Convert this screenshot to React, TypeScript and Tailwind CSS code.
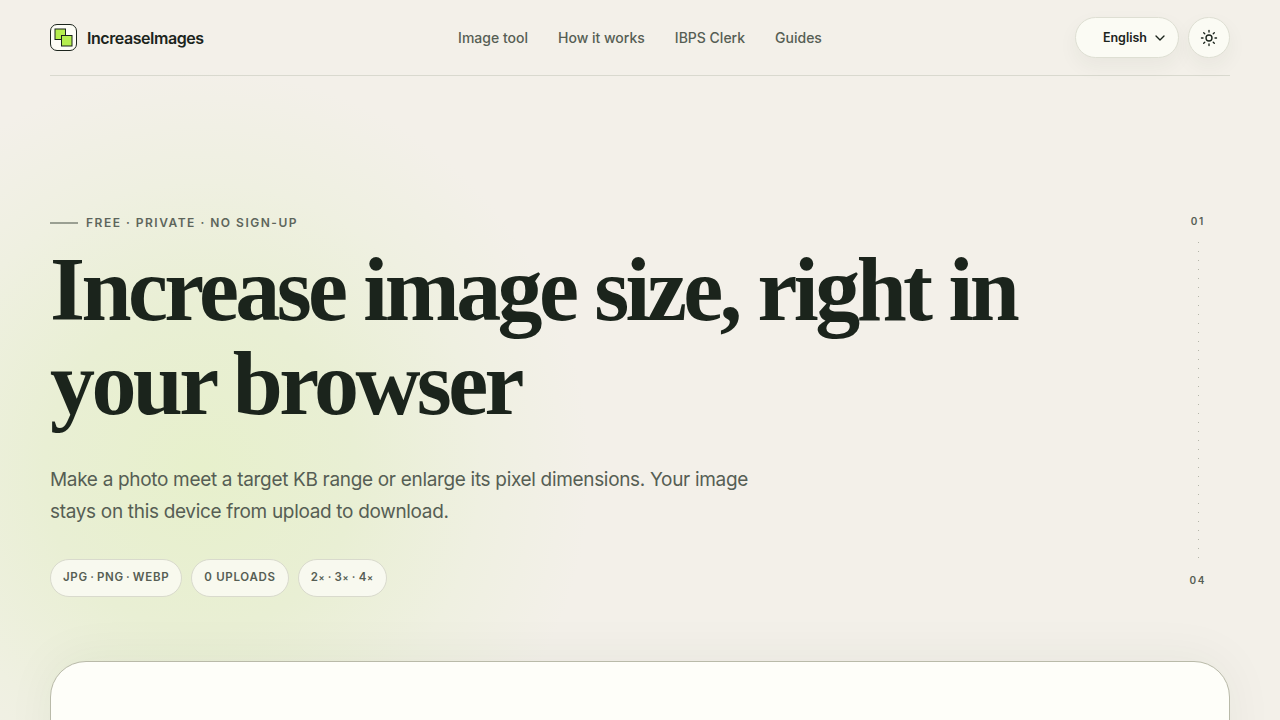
import { ChevronDown, Sun } from 'lucide-react';

const serif = { fontFamily: '"Liberation Serif", serif' };

function Chip({ children, tight }: { children: React.ReactNode; tight?: boolean }) {
  return (
    <span className={`flex h-[38px] items-center rounded-full border border-[#d9dacd] bg-[#fafaf3]/85 px-3 text-[11.5px] font-semibold tracking-[0.06em] text-[#565e54] ${tight ? '[word-spacing:-1.2px]' : ''}`}>
      {children}
    </span>
  );
}

export default function App() {
  return (
    <div className="relative h-[720px] overflow-hidden bg-[#f3f0e9] font-['Inter',sans-serif] text-[#1b241c]">
      {/* green glow behind the hero */}
      <div className="pointer-events-none absolute left-[-190px] top-[70px] h-[800px] w-[780px] rounded-full bg-[radial-gradient(closest-side,#e7f0cc_0%,#e9efd4_40%,#eff0e1_72%,#f3f0e9_100%)]" />

      <div className="relative px-[50px]">
        <header className="flex h-[76px] items-center justify-between border-b border-[#d9d9cf]">
          <div className="flex w-[300px] items-center gap-[10px]">
            <div className="flex h-[27px] w-[27px] items-center justify-center rounded-[7px] border border-[#1b241c] bg-[#fdfdf6]">
              <svg width="19" height="19" viewBox="0 0 19 19">
                <rect x="1" y="1" width="10.5" height="10.5" fill="#b5ee4e" stroke="#1b241c" strokeWidth="1" />
                <rect x="7.5" y="7.5" width="10.5" height="10.5" fill="#b5ee4e" stroke="#1b241c" strokeWidth="1" />
              </svg>
            </div>
            <span className="text-[16px] font-semibold tracking-[-0.028em]">IncreaseImages</span>
          </div>
          <nav className="flex items-center gap-[30px] text-[14px] font-medium text-[#565e54]">
            <span>Image tool</span>
            <span>How it works</span>
            <span>IBPS Clerk</span>
            <span>Guides</span>
          </nav>
          <div className="flex w-[300px] items-center justify-end gap-[9px]">
            <div className="flex h-[41px] w-[104px] items-center justify-end gap-[5px] rounded-full border border-[#dedfd3] bg-[#fbfbf4] pr-[10px] text-[12.5px] font-semibold shadow-[0_8px_20px_rgba(40,50,30,0.05)]">
              <span className="pt-px">English</span>
              <ChevronDown size={16} strokeWidth={2} />
            </div>
            <div className="flex h-[41px] w-[42px] items-center justify-center rounded-full border border-[#dedfd3] bg-[#fbfbf4] shadow-[0_8px_20px_rgba(40,50,30,0.05)]">
              <Sun size={18} strokeWidth={1.8} />
            </div>
          </div>
        </header>

        <section className="relative h-[585px] pt-[138px]">
          <div className="flex items-center gap-2 text-[12px] font-semibold tracking-[0.125em] text-[#5d655b]">
            <span className="h-[2px] w-[28px] bg-[#9a9f92]" />
            FREE · PRIVATE · NO SIGN-UP
          </div>

          <h1 style={serif} className="mt-[11px] max-w-[1000px] text-[90px] font-bold leading-[94px] tracking-[-0.04em]">
            Increase image size, right in your browser
          </h1>

          <p className="mt-[33px] max-w-[720px] text-[19px] leading-[32px] tracking-[-0.017em] text-[#565e54]">
            Make a photo meet a target KB range or enlarge its pixel dimensions. Your image stays on this device from upload to download.
          </p>

          <div className="mt-[31px] flex gap-[9px]">
            <Chip tight>JPG · PNG · WEBP</Chip>
            <Chip>0 UPLOADS</Chip>
            <Chip>
              2<span className="text-[9px]">×</span>
              <span className="mx-[2.5px]">·</span>
              3<span className="text-[9px]">×</span>
              <span className="mx-[2.5px]">·</span>
              4<span className="text-[9px]">×</span>
            </Chip>
          </div>

          {/* section rail */}
          <div className="absolute right-[24px] top-[138px] flex h-[374px] flex-col items-center text-[10px] font-semibold tracking-[0.16em] text-[#565e54]">
            <span>01</span>
            <div className="mb-[8px] ml-[1px] mt-[13px] w-px flex-1 bg-[linear-gradient(#b5b6aa_1px,transparent_1px)] bg-[length:1px_9px]" />
            <span>04</span>
          </div>
        </section>

        <div className="relative h-[120px] rounded-t-[36px] border border-[#b9baa9] bg-[#fefef9] shadow-[0_-4px_50px_rgba(40,50,30,0.05)]">
          <div style={serif} className="pl-[60px] pt-[50px] text-[36px] font-bold">
            Choose how to scale
          </div>
        </div>
      </div>
    </div>
  );
}
